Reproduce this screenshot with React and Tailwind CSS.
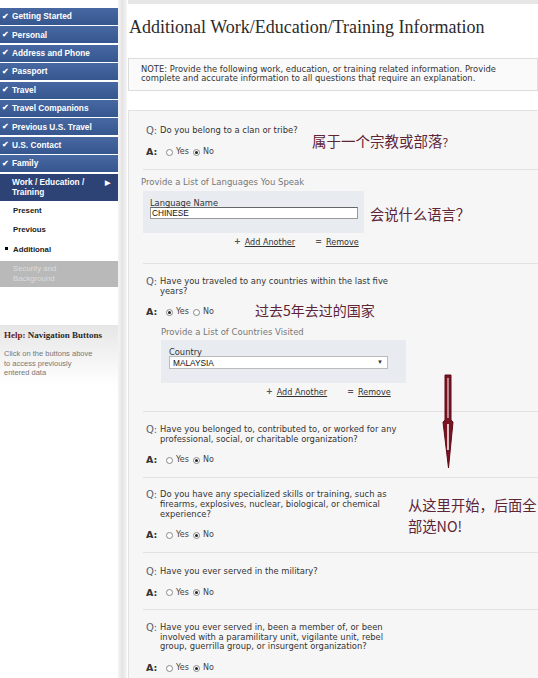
import React from 'react';

const sans = { fontFamily: '"Liberation Sans", Arial, sans-serif' };
const verd = { fontFamily: '"DejaVu Sans", Verdana, sans-serif' };
const serif = { fontFamily: '"Liberation Serif", "Times New Roman", serif' };
const cjk = { fontFamily: '"Noto Sans CJK SC", "Noto Sans", sans-serif' };

const done = [
  'Getting Started',
  'Personal',
  'Address and Phone',
  'Passport',
  'Travel',
  'Travel Companions',
  'Previous U.S. Travel',
  'U.S. Contact',
  'Family',
];

const Radio = ({ checked }) => (
  <span className="inline-flex items-center justify-center w-[7px] h-[7px] rounded-full border border-[#888] bg-white">
    {checked && <span className="w-[3px] h-[3px] rounded-full bg-[#222]" />}
  </span>
);

const Answer = ({ yes }) => (
  <div className="flex items-center h-[10px] pl-[3px]" style={verd}>
    <span className="text-[9.5px] font-bold text-[#333] w-[20px]">A:</span>
    <Radio checked={yes} />
    <span className="text-[8px] text-[#444] ml-[3px] mr-[4px]">Yes</span>
    <Radio checked={!yes} />
    <span className="text-[8px] text-[#444] ml-[3px]">No</span>
  </div>
);

const Question = ({ lines }) => (
  <div className="flex pl-[3px]" style={verd}>
    <span className="text-[10px] leading-[10px] text-[#5a6270] w-[14px] shrink-0">Q:</span>
    <div className="text-[8.4px] leading-[9.7px] text-[#333]">
      {lines.map((l) => (
        <div key={l}>{l}</div>
      ))}
    </div>
  </div>
);

const QBlock = ({ lines, yes = false, pt = 'pt-[12.5px]', last = false }) => (
  <div className={`${pt} pb-[11.5px] ${last ? '' : 'border-b border-[#e2e2e2]'}`}>
    <Question lines={lines} />
    <div className="mt-[11px]">
      <Answer yes={yes} />
    </div>
  </div>
);

const Links = ({ className }) => (
  <div className={`flex items-center h-[10px] text-[8.1px] text-[#333] ${className}`} style={verd}>
    <span className="text-[8px] font-bold text-[#555] mr-[4px]">+</span>
    <span className="underline">Add Another</span>
    <span className="text-[8px] font-bold text-[#555] ml-[20px] mr-[4px]">=</span>
    <span className="underline">Remove</span>
  </div>
);

export default function App() {
  return (
    <div className="flex w-[538px] h-[678px] bg-white overflow-hidden">
      <aside className="w-[118px] shrink-0 pt-[8px]" style={sans}>
        <div className="flex flex-col gap-[1.4px]">
          {done.map((d) => (
            <div
              key={d}
              className="h-[17px] flex items-center pl-[2px] bg-gradient-to-b from-[#4868a3] to-[#36568f] text-white text-[8.3px] font-bold"
            >
              <span className="text-[8px] mr-[3px]">✔</span>
              {d}
            </div>
          ))}
          <div className="h-[27px] flex items-center justify-between pl-[12px] pr-[8px] bg-[#2d4275] text-white text-[8.3px] font-bold leading-[10px]">
            <span>
              Work / Education /
              <br />
              Training
            </span>
            <span className="text-[7px] self-start mt-[4px]">▶</span>
          </div>
        </div>
        <div className="text-[7.8px] font-bold text-[#222] pl-[13px] leading-[19.5px]">
          <div>Present</div>
          <div>Previous</div>
          <div className="relative">
            <span className="absolute left-[-8px] top-[7px] w-[3px] h-[3px] bg-black" />
            Additional
          </div>
        </div>
        <div className="mt-[1.5px] h-[26px] bg-[#b9b9b9] text-[#dcdcdc] text-[7.8px] leading-[9.5px] pl-[13px] flex flex-col justify-center">
          <span>Security and</span>
          <span>Background</span>
        </div>
        <div className="mt-[38px] h-[60px] bg-gradient-to-b from-[#e6e6e6] to-white pt-[4px] pl-[4px]">
          <div className="text-[9px] font-bold text-[#2a2a2a]" style={serif}>
            <span className="text-[#6a1a1a]">Help:</span> Navigation Buttons
          </div>
          <div className="mt-[7px] text-[7.5px] leading-[9.5px] text-[#777]">
            Click on the buttons above
            <br />
            to access previously
            <br />
            entered data
          </div>
        </div>
      </aside>

      <div className="w-[9px] shrink-0 bg-gradient-to-r from-[#f4f4f4] via-[#e4e4e4] to-[#f6f6f6]" />

      <main className="relative flex-1 pl-[1px]">
        <div className="h-[4px] bg-[#e6e6e6]" />
        <h1 className="mt-[12px] pl-[1px] text-[18px] leading-[22px] text-[#2b2b2b]" style={serif}>
          Additional Work/Education/Training Information
        </h1>
        <div
          className="mt-[20px] h-[33px] border border-[#dcdcdc] bg-[#fafafa] pl-[12px] pt-[6px] text-[8.4px] leading-[9px] text-[#333]"
          style={verd}
        >
          NOTE: Provide the following work, education, or training related information. Provide
          <br />
          complete and accurate information to all questions that require an explanation.
        </div>

        <section className="mt-[19px] bg-[#f6f6f6] border-t border-l border-[#e2e2e2] pl-[14px] h-[600px]">
          <QBlock pt="pt-[15px]" lines={['Do you belong to a clan or tribe?']} />

          <div className="pt-[8px] pb-[16px] border-b border-[#e2e2e2]" style={verd}>
            <div className="ml-[-2px] text-[8.5px] leading-[9px] text-[#777]">
              Provide a List of Languages You Speak
            </div>
            <div className="mt-[4px] w-[221px] h-[42px] bg-[#e8ecf1] pl-[7px] pt-[8px]">
              <div className="text-[8.3px] leading-[8px] text-[#333]">Language Name</div>
              <div className="w-[208px] h-[12px] border border-[#999] border-t-[#666] bg-white text-[8.3px] leading-[10px] pl-[1px] text-[#111]" style={sans}>
                CHINESE
              </div>
            </div>
            <Links className="mt-[4.5px] pl-[91px]" />
          </div>

          <div className="pt-[13px] pb-[14px] border-b border-[#e2e2e2]">
            <Question lines={['Have you traveled to any countries within the last five', 'years?']} />
            <div className="mt-[11px]">
              <Answer yes />
            </div>
            <div className="mt-[11px] pl-[18px]" style={verd}>
              <div className="text-[8.5px] leading-[9px] text-[#777]">
                Provide a List of Countries Visited
              </div>
              <div className="mt-[3px] w-[245px] h-[43px] bg-[#e8ecf1] pl-[8px] pt-[8px]">
                <div className="text-[8.3px] leading-[8px] text-[#333]">Country</div>
                <div className="w-[219px] h-[13px] border border-[#bbb] bg-white flex items-center justify-between pl-[3px] pr-[4px] text-[8.3px] text-[#111]" style={sans}>
                  MALAYSIA
                  <span className="text-[6px] text-[#333]">▼</span>
                </div>
              </div>
              <Links className="mt-[4px] pl-[105px]" />
            </div>
          </div>

          <QBlock
            lines={['Have you belonged to, contributed to, or worked for any', 'professional, social, or charitable organization?']}
          />
          <QBlock
            lines={[
              'Do you have any specialized skills or training, such as',
              'firearms, explosives, nuclear, biological, or chemical',
              'experience?',
            ]}
          />
          <QBlock pt="pt-[14px]" lines={['Have you ever served in the military?']} />
          <QBlock
            last
            lines={[
              'Have you ever served in, been a member of, or been',
              'involved with a paramilitary unit, vigilante unit, rebel',
              'group, guerrilla group, or insurgent organization?',
            ]}
          />
        </section>

        <div className="absolute left-[185px] top-[130px] text-[14.5px] text-[#5e2536]" style={cjk}>
          属于一个宗教或部落<span className="text-[11px]">？</span>
        </div>
        <div className="absolute left-[243px] top-[203px] text-[14.3px] text-[#5e2536]" style={cjk}>
          会说什么语言？
        </div>
        <div className="absolute left-[128px] top-[300px] text-[14px] text-[#5e2536]" style={cjk}>
          过去5年去过的国家
        </div>
        <div className="absolute left-[281px] top-[494px] text-[14.3px] leading-[21px] text-[#5e2536]" style={cjk}>
          从这里开始，后面全
          <br />
          部选NO!
        </div>

        <svg className="absolute left-[313px] top-[372px]" width="16" height="100" viewBox="0 0 16 100">
          <path
            d="M5 3 L11 3 L11 48 L13 50 L8.5 96 L3 50 L5 48 Z"
            fill="#7a1322"
            stroke="#5a0c18"
            strokeWidth="1"
          />
          <path d="M8 6 L8 46" stroke="#ffffff" strokeWidth="1" />
          <path d="M8 52 L8 78" stroke="#ffffff" strokeWidth="1.5" />
        </svg>
      </main>
    </div>
  );
}
